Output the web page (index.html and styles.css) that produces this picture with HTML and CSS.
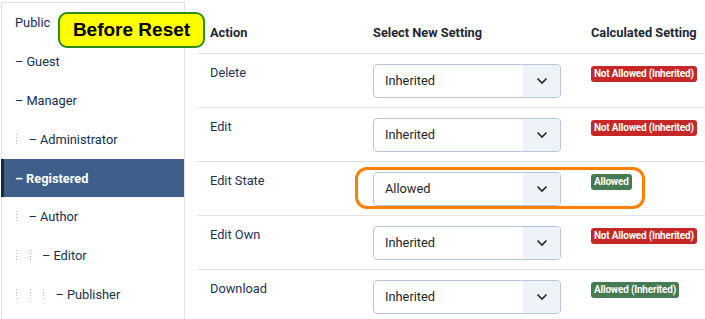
FILE: index.html
```html
<!DOCTYPE html>
<html lang="en">
<head>
  <meta charset="UTF-8" />
  <title>Permissions</title>
  <link rel="stylesheet" href="styles.css">
</head>
<body>

  <div class="page">
    <ul class="groups">
      <li class="group">Public</li>
      <li class="group"><span class="dash">–</span>Guest</li>
      <li class="group"><span class="dash">–</span>Manager</li>
      <li class="group"><span class="lvl"></span><span class="dash">–</span>Administrator</li>
      <li class="group active"><span class="dash">–</span>Registered</li>
      <li class="group"><span class="lvl"></span><span class="dash">–</span>Author</li>
      <li class="group"><span class="lvl"></span><span class="lvl"></span><span class="dash">–</span>Editor</li>
      <li class="group"><span class="lvl"></span><span class="lvl"></span><span class="lvl"></span><span class="dash">–</span>Publisher</li>
    </ul>

    <table class="rules">
      <colgroup>
        <col class="col-action">
        <col class="col-select">
        <col>
      </colgroup>
      <thead>
        <tr>
          <th>Action</th>
          <th>Select New Setting</th>
          <th>Calculated Setting</th>
        </tr>
      </thead>
      <tbody>
        <tr>
          <td class="action">Delete</td>
          <td><div class="select"><span class="value">Inherited</span><span class="arrow"><svg width="12" height="8" viewBox="0 0 12 8"><path d="M1.5 1.5 L6 6 L10.5 1.5" fill="none" stroke="#22262a" stroke-width="1.6"/></svg></span></div></td>
          <td><span class="badge denied">Not Allowed (Inherited)</span></td>
        </tr>
        <tr>
          <td class="action">Edit</td>
          <td><div class="select"><span class="value">Inherited</span><span class="arrow"><svg width="12" height="8" viewBox="0 0 12 8"><path d="M1.5 1.5 L6 6 L10.5 1.5" fill="none" stroke="#22262a" stroke-width="1.6"/></svg></span></div></td>
          <td><span class="badge denied">Not Allowed (Inherited)</span></td>
        </tr>
        <tr>
          <td class="action">Edit State</td>
          <td><div class="select"><span class="value">Allowed</span><span class="arrow"><svg width="12" height="8" viewBox="0 0 12 8"><path d="M1.5 1.5 L6 6 L10.5 1.5" fill="none" stroke="#22262a" stroke-width="1.6"/></svg></span></div></td>
          <td><span class="badge allowed">Allowed</span></td>
        </tr>
        <tr>
          <td class="action">Edit Own</td>
          <td><div class="select"><span class="value">Inherited</span><span class="arrow"><svg width="12" height="8" viewBox="0 0 12 8"><path d="M1.5 1.5 L6 6 L10.5 1.5" fill="none" stroke="#22262a" stroke-width="1.6"/></svg></span></div></td>
          <td><span class="badge denied">Not Allowed (Inherited)</span></td>
        </tr>
        <tr>
          <td class="action">Download</td>
          <td><div class="select"><span class="value">Inherited</span><span class="arrow"><svg width="12" height="8" viewBox="0 0 12 8"><path d="M1.5 1.5 L6 6 L10.5 1.5" fill="none" stroke="#22262a" stroke-width="1.6"/></svg></span></div></td>
          <td><span class="badge allowed">Allowed (Inherited)</span></td>
        </tr>
      </tbody>
    </table>
  </div>

  <div class="note">Before Reset</div>
  <div class="highlight"></div>

</body>
</html>
```

FILE: styles.css
```css
body {
  margin: 0;
  font-family: Roboto, 'Liberation Sans', sans-serif;
  font-size: 12.8px;
  color: #22262a;
  background: #fff;
  overflow: hidden;
}
.page {
  display: flex;
  align-items: flex-start;
  padding: 2px 0 0 1px;
}
.groups {
  list-style: none;
  margin: 0;
  padding: 0;
  width: 182px;
  height: 330px;
  border: 1px solid #dfe3e7;
  border-bottom: none;
  flex-shrink: 0;
}
.group {
  display: flex;
  align-items: center;
  height: 39px;
  padding-left: 13px;
  color: #132f53;
}
.group .dash {
  margin-right: 3px;
}
.group .lvl {
  width: 13.5px;
  height: 11px;
  flex-shrink: 0;
  background: repeating-linear-gradient(to bottom, #a9b6c6 0 1px, transparent 1px 3px);
  background-size: 1px 100%;
  background-repeat: no-repeat;
  background-position: 1px 0;
}
.group.active {
  background-color: #3e5f8b;
  color: #fff;
  font-weight: bold;
  height: 38px;
  margin-left: -1px;
  border-left: 3px solid #1c2a3e;
  padding-left: 11px;
}
.rules {
  margin-left: 12px;
  width: 508px;
  border-collapse: collapse;
  table-layout: fixed;
  margin-top: -2px;
}
.col-action {
  width: 163px;
}
.col-select {
  width: 218px;
}
.rules th {
  text-align: left;
  font-weight: bold;
  padding: 24px 13px 12px;
  line-height: 17px;
  white-space: nowrap;
  color: #1e2833;
}
.rules td {
  border-top: 1px solid #dfe3e7;
  padding: 10px 13px 9px;
  vertical-align: top;
  height: 34px;
}
.rules td.action {
  line-height: 17px;
  color: #1c3456;
}
.select {
  display: flex;
  width: 188px;
  height: 34px;
  box-sizing: border-box;
  border: 1px solid #b8c6dc;
  border-radius: 4px;
  overflow: hidden;
}
.select .value {
  flex: 1;
  padding-left: 11px;
  line-height: 32px;
  color: #22262a;
}
.select .arrow {
  width: 37px;
  background-color: #eef3fa;
  display: flex;
  align-items: center;
  justify-content: center;
}
.badge {
  display: inline-block;
  margin-top: 2px;
  height: 16px;
  line-height: 16px;
  padding: 0 3px;
  border-radius: 3px;
  color: #fff;
  font-size: 10px;
  font-weight: bold;
  letter-spacing: -0.2px;
  white-space: nowrap;
}
.denied {
  background-color: #c52827;
}
.allowed {
  background-color: #457a52;
}
.note {
  position: absolute;
  left: 58px;
  top: 12px;
  width: 147px;
  height: 36px;
  box-sizing: border-box;
  background-color: #ffff00;
  border: 2px solid #2f8a1e;
  border-radius: 9px;
  font-family: 'Liberation Sans', Arial, sans-serif;
  font-weight: bold;
  font-size: 19px;
  display: flex;
  align-items: center;
  justify-content: center;
  color: #000;
}
.highlight {
  position: absolute;
  left: 355px;
  top: 167px;
  width: 290px;
  height: 42px;
  box-sizing: border-box;
  border: 3px solid #ff8000;
  border-radius: 12px;
}
```
